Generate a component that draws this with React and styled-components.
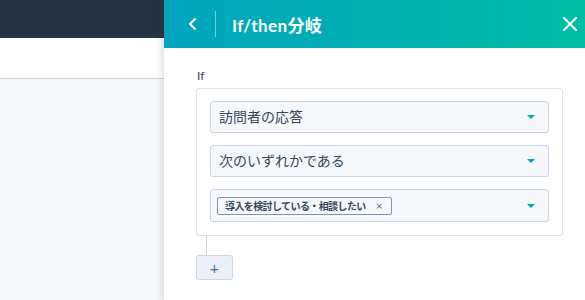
import styled, { createGlobalStyle } from 'styled-components';

const GlobalStyle = createGlobalStyle`
  html, body {
    margin: 0;
    padding: 0;
  }
  body {
    font-family: 'Lato', 'Noto Sans CJK JP', sans-serif;
    color: #33475b;
    background: #f5f8fa;
  }
`;

const Page = styled.div`
  display: flex;
  width: 585px;
  height: 300px;
  overflow: hidden;
`;

const Main = styled.div`
  flex: 1;
  display: flex;
  flex-direction: column;
`;

const TopNav = styled.div`
  height: 38px;
  background: #253342;
`;

const SubHeader = styled.div`
  height: 40px;
  background: #fff;
  border-bottom: 1px solid #cbd6e2;
`;

const Content = styled.div`
  flex: 1;
  background: #f5f8fa;
`;

const Panel = styled.aside`
  width: 421px;
  display: flex;
  flex-direction: column;
  background: #fff;
  box-shadow: -2px 0 8px rgba(45, 62, 80, 0.18);
  z-index: 1;
`;

const PanelHeader = styled.header`
  height: 48px;
  display: flex;
  align-items: center;
  padding: 0 1px 0 20px;
  background: linear-gradient(90deg, #00a4bd 0%, #00bda5 100%);
  color: #fff;
`;

const IconButton = styled.button`
  display: flex;
  align-items: center;
  justify-content: center;
  width: ${(p) => p.$size}px;
  height: ${(p) => p.$size}px;
  padding: 0;
  border: 0;
  background: transparent;
  color: #fff;
  cursor: pointer;
`;

const Divider = styled.span`
  width: 1px;
  height: 26px;
  margin: 0 16px 0 15px;
  background: rgba(255, 255, 255, 0.45);
`;

const Title = styled.h1`
  flex: 1;
  margin: 0;
  font-size: 17px;
  font-weight: 700;
  letter-spacing: 0.4px;
`;

const PanelBody = styled.div`
  padding: 20px 22px 0 32px;
`;

const Label = styled.div`
  font-size: 12px;
  line-height: 16px;
  margin: 0 0 4px 1px;
`;

const RuleBox = styled.div`
  display: flex;
  flex-direction: column;
  gap: 12px;
  padding: 12px 13px 13px 13px;
  border: 1px solid #dfe3eb;
  border-radius: 3px;
`;

const Select = styled.div`
  display: flex;
  align-items: center;
  height: ${(p) => (p.$tall ? 33 : 32)}px;
  box-sizing: border-box;
  padding: 0 12px 0 ${(p) => (p.$tall ? 6 : 8)}px;
  background: #f5f8fa;
  border: 1px solid #cbd6e2;
  border-radius: 3px;
`;

const Value = styled.span`
  flex: 1;
  font-size: 14px;
  line-height: 18px;
  color: #33475b;
`;

const Caret = styled.span`
  width: 0;
  height: 0;
  border-left: 4px solid transparent;
  border-right: 4px solid transparent;
  border-top: 4px solid #00a4bd;
  margin-right: 1px;
`;

const Tags = styled.div`
  flex: 1;
  display: flex;
`;

const Tag = styled.span`
  display: inline-flex;
  align-items: center;
  gap: 10px;
  height: 18px;
  box-sizing: border-box;
  padding: 0 8px 0 7px;
  border: 1px solid #7c98b6;
  border-radius: 2px;
  background: #f5f8fa;
  font-size: 10px;
  font-weight: 700;
  letter-spacing: -0.6px;
  color: #33475b;
`;

const TagRemove = styled.span`
  font-weight: 400;
  font-size: 12px;
  letter-spacing: 0;
  color: #516f90;
`;

const Connector = styled.div`
  width: 1px;
  height: 19px;
  margin-left: 10px;
  background: #cbd6e2;
`;

const AddButton = styled.button`
  width: 37px;
  height: 25px;
  padding: 0;
  border: 1px solid #cbd6e2;
  border-radius: 3px;
  background: #eaf0f6;
  color: #506e91;
  font-family: inherit;
  font-size: 16px;
  line-height: 1;
  display: flex;
  align-items: center;
  justify-content: center;
`;

export default function App() {
  return (
    <>
      <GlobalStyle />
      <Page>
        <Main>
          <TopNav />
          <SubHeader />
          <Content />
        </Main>
        <Panel>
          <PanelHeader>
            <IconButton $size={16} aria-label='back'>
              <svg width='9' height='12' viewBox='0 0 9 12' fill='none'>
                <path d='M7 1 L2 6 L7 11' stroke='#fff' strokeWidth='2' strokeLinecap='round' strokeLinejoin='round' />
              </svg>
            </IconButton>
            <Divider />
            <Title>If/then分岐</Title>
            <IconButton $size={28} aria-label='close'>
              <svg width='14' height='14' viewBox='0 0 14 14' fill='none'>
                <path d='M1 1 L13 13 M13 1 L1 13' stroke='#fff' strokeWidth='2' strokeLinecap='round' />
              </svg>
            </IconButton>
          </PanelHeader>
          <PanelBody>
            <Label>If</Label>
            <RuleBox>
              <Select>
                <Value>訪問者の応答</Value>
                <Caret />
              </Select>
              <Select>
                <Value>次のいずれかである</Value>
                <Caret />
              </Select>
              <Select $tall>
                <Tags>
                  <Tag>
                    導入を検討している・相談したい
                    <TagRemove>×</TagRemove>
                  </Tag>
                </Tags>
                <Caret />
              </Select>
            </RuleBox>
            <Connector />
            <AddButton>+</AddButton>
          </PanelBody>
        </Panel>
      </Page>
    </>
  );
}
